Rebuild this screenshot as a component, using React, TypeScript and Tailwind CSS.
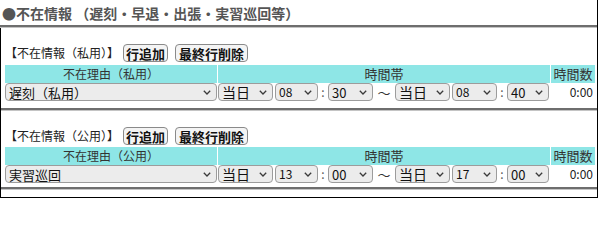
import React from 'react';

interface Row {
  reason: string;
  fromDay: string;
  fromH: string;
  fromM: string;
  toDay: string;
  toH: string;
  toM: string;
  total: string;
}

const sections = [
  {
    label: '【不在情報（私用）】',
    head: '不在理由（私用）',
    row: { reason: '遅刻（私用）', fromDay: '当日', fromH: '08', fromM: '30', toDay: '当日', toH: '08', toM: '40', total: '0:00' },
    pb: 'pb-[7px]',
    mt: 'mt-[2px]',
  },
  {
    label: '【不在情報（公用）】',
    head: '不在理由（公用）',
    row: { reason: '実習巡回', fromDay: '当日', fromH: '13', fromM: '00', toDay: '当日', toH: '17', toM: '00', total: '0:00' },
    pb: 'pb-[4px]',
    mt: 'mt-[1px]',
  },
];

function Chevron() {
  return (
    <svg width="8" height="5" viewBox="0 0 8 5" className="shrink-0">
      <polyline points="0.8,0.8 4,4 7.2,0.8" fill="none" stroke="#3a3a3a" strokeWidth="1.3" />
    </svg>
  );
}

function Select({ value, className, textClass }: { value: string; className: string; textClass?: string }) {
  return (
    <div
      className={
        'h-[18px] flex items-center justify-between pl-[3px] pr-[5px] bg-[#ececec] border border-[#9c9c9c] rounded-[4px] text-[#111] ' +
        className
      }
    >
      <span className={textClass ?? 'text-[13px] leading-none'}>{value}</span>
      <Chevron />
    </div>
  );
}

function Button({ children, className }: { children: React.ReactNode; className: string }) {
  return (
    <button
      className={
        'h-[18px] flex items-center justify-center border border-[#8a8a8a] rounded-[4px] bg-[#f4f4f4] text-[13px] font-bold leading-none text-[#111] ' +
        className
      }
    >
      {children}
    </button>
  );
}

function Divider() {
  return (
    <div className="shrink-0">
      <div className="h-[2px] bg-[#6e6e6e]" />
      <div className="h-px bg-[#c4c4c4]" />
    </div>
  );
}

function Section({ label, head, row, pb, mt }: { label: string; head: string; row: Row; pb: string; mt: string }) {
  return (
    <>
      <div className={'pt-[16px] pl-[4px] pr-[2px] ' + pb}>
        <div className="h-[19px] flex items-start">
          <span className="text-[12px] leading-[18px] text-[#222] mr-[4px]">{label}</span>
          <Button className="w-[45px] mr-[7px]">行追加</Button>
          <Button className="w-[73px]">最終行削除</Button>
        </div>
        <div className={'grid grid-cols-[212px_332px_44px] gap-x-px w-[590px] ' + mt}>
          <div className="h-[18px] bg-[#8ee6e6] text-center text-[12px] leading-[18px] text-[#333]">{head}</div>
          <div className="h-[18px] bg-[#8ee6e6] text-center text-[13px] leading-[18px] text-[#333]">時間帯</div>
          <div className="h-[18px] bg-[#8ee6e6] text-center text-[13px] leading-[18px] text-[#333] whitespace-nowrap">時間数</div>

          <Select value={row.reason} className="w-[212px]" />
          <div className="h-[18px] flex items-center">
            <Select value={row.fromDay} className="w-[55px]" textClass="text-[14px] leading-none" />
            <Select value={row.fromH} className="w-[43px] ml-[2px]" textClass="text-[12px] leading-none" />
            <span className="w-[10px] text-center text-[12px] text-[#555] leading-none">:</span>
            <Select value={row.fromM} className="w-[45px]" textClass="text-[13px] leading-none" />
            <span className="w-[22px] text-center text-[13px] text-[#333] leading-none">〜</span>
            <Select value={row.toDay} className="w-[55px]" textClass="text-[14px] leading-none" />
            <Select value={row.toH} className="w-[45px] ml-[2px]" textClass="text-[12px] leading-none" />
            <span className="w-[10px] text-center text-[12px] text-[#555] leading-none">:</span>
            <Select value={row.toM} className="w-[42px]" textClass="text-[13px] leading-none" />
          </div>
          <div className="h-[18px] flex items-center justify-end pr-[2px] text-[12px] text-[#222] leading-none">{row.total}</div>
        </div>
      </div>
      <Divider />
    </>
  );
}

export default function App() {
  return (
    <div
      className="w-[599px] h-[200px] bg-white overflow-hidden"
      style={{ fontFamily: '"Noto Sans CJK JP", "Noto Sans", sans-serif' }}
    >
      <div className="w-[598px] h-[198px] border-r border-b border-black flex flex-col">
        <div className="h-[25px] pl-[2px] flex items-center text-[14px] font-bold text-[#555] whitespace-nowrap leading-none">
          ●不在情報 （遅刻・早退・出張・実習巡回等）
        </div>
        <Divider />
        <div className="flex-1 border-l border-black flex flex-col">
          {sections.map((s) => (
            <Section key={s.label} {...s} />
          ))}
        </div>
      </div>
    </div>
  );
}
